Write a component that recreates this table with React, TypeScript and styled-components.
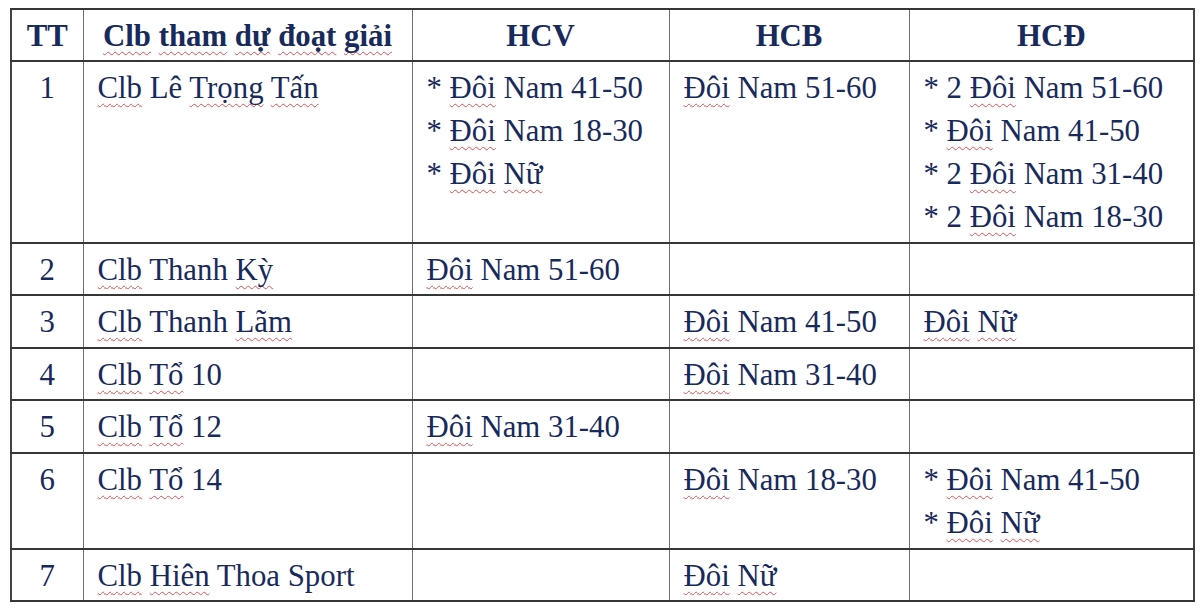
import React from "react";
import styled, { createGlobalStyle } from "styled-components";

const GlobalStyle = createGlobalStyle`
  html, body {
    margin: 0;
    padding: 0;
    background: #ffffff;
  }
`;

const Page = styled.div`
  padding: 8px 0 0 10px;
`;

const Table = styled.table`
  border-collapse: collapse;
  table-layout: fixed;
  width: 1183px;
  font-family: "Liberation Serif", "Times New Roman", serif;
  font-size: 30.8px;
  line-height: 43px;
  color: #182a5c;
`;

const Cell = styled.td<{ $center?: boolean }>`
  padding: 5px 14px 2.6px 14px;
  vertical-align: top;
  text-align: ${({ $center }) => ($center ? "center" : "left")};
  border-top: 2px solid #363636;
  border-bottom: 2px solid #363636;
  border-left: 1.5px solid #6e6e6e;
  border-right: 1.5px solid #6e6e6e;
  white-space: nowrap;

  &:first-child {
    border-left: 2px solid #444;
  }
  &:last-child {
    border-right: 2px solid #444;
  }
`;

const HeadCell = styled(Cell).attrs({ as: "th" })`
  font-weight: bold;
  text-align: center;
  padding-bottom: 2px;
`;

const Line = styled.div``;

const Flagged = styled.span`
  text-decoration: underline wavy #dd5050;
  text-decoration-thickness: 1px;
  text-underline-offset: 5px;
  text-decoration-skip-ink: none;
`;

const FLAGGED = new Set([
  "Clb", "tham", "dự", "đoạt", "giải", "Trọng", "Tấn", "Đôi", "Nữ", "Kỳ", "Lãm", "Tổ", "Hiên",
]);

const Words: React.FC<{ text: string }> = ({ text }) => (
  <>
    {text.split(" ").map((w, i) => (
      <React.Fragment key={i}>
        {i > 0 && " "}
        {FLAGGED.has(w) ? <Flagged>{w}</Flagged> : w}
      </React.Fragment>
    ))}
  </>
);

type Row = {
  tt: string;
  club: string;
  hcv: string[];
  hcb: string[];
  hcd: string[];
};

const rows: Row[] = [
  {
    tt: "1",
    club: "Clb Lê Trọng Tấn",
    hcv: ["* Đôi Nam 41-50", "* Đôi Nam 18-30", "* Đôi Nữ"],
    hcb: ["Đôi Nam 51-60"],
    hcd: ["* 2 Đôi Nam 51-60", "* Đôi Nam 41-50", "* 2 Đôi Nam 31-40", "* 2 Đôi Nam 18-30"],
  },
  { tt: "2", club: "Clb Thanh Kỳ", hcv: ["Đôi Nam 51-60"], hcb: [], hcd: [] },
  { tt: "3", club: "Clb Thanh Lãm", hcv: [], hcb: ["Đôi Nam 41-50"], hcd: ["Đôi Nữ"] },
  { tt: "4", club: "Clb Tổ 10", hcv: [], hcb: ["Đôi Nam 31-40"], hcd: [] },
  { tt: "5", club: "Clb Tổ 12", hcv: ["Đôi Nam 31-40"], hcb: [], hcd: [] },
  {
    tt: "6",
    club: "Clb Tổ 14",
    hcv: [],
    hcb: ["Đôi Nam 18-30"],
    hcd: ["* Đôi Nam 41-50", "* Đôi Nữ"],
  },
  { tt: "7", club: "Clb Hiên Thoa Sport", hcv: [], hcb: ["Đôi Nữ"], hcd: [] },
];

const Lines: React.FC<{ items: string[] }> = ({ items }) => (
  <>
    {items.length === 0 ? <Line>&nbsp;</Line> : null}
    {items.map((t, i) => (
      <Line key={i}>
        <Words text={t} />
      </Line>
    ))}
  </>
);

export default function App() {
  return (
    <>
      <GlobalStyle />
      <Page>
        <Table>
          <colgroup>
            <col style={{ width: 72 }} />
            <col style={{ width: 329 }} />
            <col style={{ width: 257 }} />
            <col style={{ width: 240 }} />
            <col style={{ width: 285 }} />
          </colgroup>
          <thead>
            <tr>
              <HeadCell>TT</HeadCell>
              <HeadCell>
                <Words text="Clb tham dự đoạt giải" />
              </HeadCell>
              <HeadCell>HCV</HeadCell>
              <HeadCell>HCB</HeadCell>
              <HeadCell>HCĐ</HeadCell>
            </tr>
          </thead>
          <tbody>
            {rows.map((r) => (
              <tr key={r.tt}>
                <Cell $center>{r.tt}</Cell>
                <Cell>
                  <Words text={r.club} />
                </Cell>
                <Cell>
                  <Lines items={r.hcv} />
                </Cell>
                <Cell>
                  <Lines items={r.hcb} />
                </Cell>
                <Cell>
                  <Lines items={r.hcd} />
                </Cell>
              </tr>
            ))}
          </tbody>
        </Table>
      </Page>
    </>
  );
}
